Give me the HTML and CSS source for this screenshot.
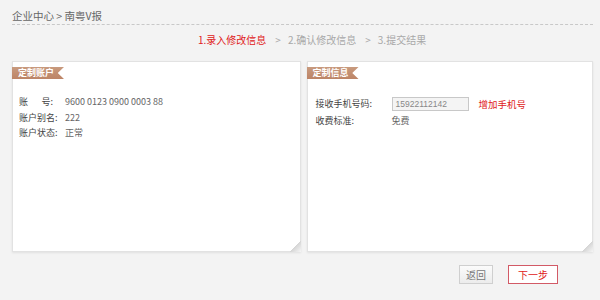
FILE: index.html
```html
<!DOCTYPE html>
<html lang="zh">
<head>
<meta charset="utf-8">
<link rel="stylesheet" href="styles.css">
</head>
<body>
<div class="page">
  <div class="crumb">企业中心 &gt; 南粤V报</div>
  <div class="steps"><span class="on">1.录入修改信息</span><span class="sep">&gt;</span><span>2.确认修改信息</span><span class="sep">&gt;</span><span>3.提交结果</span></div>
  <div class="panels">
    <div class="panel">
      <div class="ribbon">定制账户</div>
      <div class="rows">
        <div class="row"><span class="lab lab-a">账&emsp;&ensp;号:</span><span class="val">9600 0123 0900 0003 88</span></div>
        <div class="row"><span class="lab lab-a">账户别名:</span><span class="val">222</span></div>
        <div class="row"><span class="lab lab-a">账户状态:</span><span class="val">正常</span></div>
      </div>
      <span class="curl"></span>
    </div>
    <div class="panel">
      <div class="ribbon">定制信息</div>
      <div class="rows rows-b">
        <div class="row"><span class="lab lab-b">接收手机号码:</span><span class="input">15922112142</span><span class="add">增加手机号</span></div>
        <div class="row"><span class="lab lab-b">收费标准:</span><span class="val">免费</span></div>
      </div>
      <span class="curl"></span>
    </div>
  </div>
  <div class="actions">
    <span class="btn">返回</span>
    <span class="btn btn-next">下一步</span>
  </div>
</div>
</body>
</html>
```
FILE: styles.css
```css
html, body { margin: 0; padding: 0; background: #f3f3f3; }
body { width: 600px; height: 300px; overflow: hidden; font-family: "Noto Sans CJK SC", "Liberation Sans", sans-serif; font-size: 9px; color: #555; }
.page { padding: 9px 7px 0 12px; }
.crumb { font-size: 10.5px; color: #666; line-height: 14px; padding-bottom: 1px; border-bottom: 1px dashed #c8c8c8; }
.steps { margin: 7px 0 0 186px; font-size: 10px; line-height: 15px; color: #a8a8a8; display: flex; }
.steps .on { color: #e02020; }
.steps .sep { margin: 0 7px 0 9px; }
.panels { display: flex; gap: 6px; margin-top: 14px; }
.panel { position: relative; height: 189px; background: #fff; border: 1px solid #e2e2e2; box-shadow: 0 1px 2px rgba(0,0,0,0.08); }
.panel:first-child { width: 287px; }
.panel:last-child { width: 285px; }
.ribbon { margin: 5px 0 0 -1px; width: 52px; height: 12px; line-height: 12px; padding-left: 6px; box-sizing: border-box; font-size: 9px; font-weight: bold; color: #fff; background: linear-gradient(#c89a7e, #bd8466); clip-path: polygon(0 0, 100% 0, 88% 50%, 100% 100%, 0 100%); }
.rows { margin: 15px 0 0 6px; }
.rows-b { margin-left: 8px; margin-top: 15px; }
.row { display: flex; align-items: center; height: 15.5px; white-space: nowrap; }
.lab { color: #444; flex: none; }
.lab-a { width: 46px; }
.lab-b { width: 76px; }
.val { color: #666; }
.input { box-sizing: border-box; width: 77px; height: 14px; line-height: 12px; border: 1px solid #c8c8c8; background: #f4f4f4; color: #888; font-size: 8.5px; padding-left: 3px; font-family: "Liberation Sans", sans-serif; }
.rows-b .row:first-child { height: 19px; }
.add { color: #e02020; margin-left: 10px; font-size: 9.5px; }
.curl { position: absolute; right: -1px; bottom: -1px; width: 11px; height: 11px; background: linear-gradient(135deg, #fff 48%, #d6d6d6 50%, #f6f6f6 100%); }
.actions { display: flex; justify-content: flex-end; gap: 15px; margin: 13px 35px 0 0; }
.btn { box-sizing: border-box; width: 34px; height: 19px; line-height: 17px; text-align: center; border: 1px solid #cfcfcf; background: linear-gradient(#fbfbfb, #ececec); color: #777; font-size: 10px; }
.btn-next { width: 50px; border-color: #d25a66; background: #fff; color: #e02020; }
```
